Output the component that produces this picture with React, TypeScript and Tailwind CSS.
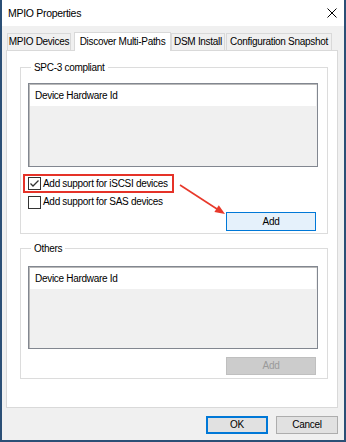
import React from "react";

const tabs = [
  { label: "MPIO Devices", w: "w-[64px]", ml: "ml-[1px]" },
  { label: "Discover Multi-Paths", w: "w-[97px]", ml: "ml-[3px]", active: true },
  { label: "DSM Install", w: "w-[54px]", ml: "ml-0" },
  { label: "Configuration Snapshot", w: "w-[106px]", ml: "ml-[1px]" },
];

const CheckBox = ({ checked }: { checked?: boolean }) => (
  <span className="w-[13px] h-[13px] border border-[#333333] bg-white flex items-center justify-center shrink-0">
    {checked && (
      <svg width="11" height="11" viewBox="0 0 11 11">
        <path d="M1.5 5.5 L4 8 L9.5 2.5" fill="none" stroke="#333333" strokeWidth="1.3" />
      </svg>
    )}
  </span>
);

const ListBox = ({ h }: { h: string }) => (
  <div className={`${h} border border-[#828790] shadow-[inset_1px_1px_0_#b9b9b9] bg-[#f0f0f0] flex flex-col p-px`}>
    <div className="h-[21px] bg-white flex items-center pl-[5px]">Device Hardware Id</div>
  </div>
);

export default function App() {
  return (
    <div className="w-[346px] h-[442px] bg-[#f0f0f0] border-x-2 border-b-2 border-[#2b4f76] flex flex-col text-[10px] tracking-[-0.3px] text-black font-['Liberation_Sans',Arial,sans-serif] leading-none whitespace-nowrap">
      {/* title bar */}
      <div className="h-[26px] bg-white flex items-center justify-between pl-[6px] pr-[7px] shrink-0">
        <span className="text-[10.5px] tracking-[-0.3px]">MPIO Properties</span>
        <svg width="10" height="10" viewBox="0 0 10 10">
          <path d="M0.5 0.5 L9.5 9.5 M9.5 0.5 L0.5 9.5" stroke="#000" strokeWidth="1" />
        </svg>
      </div>

      <div className="flex-1 flex flex-col pl-[4px] pr-[6px] pt-[6px]">
        {/* tabs */}
        <div className="h-[18px] flex items-end">
          {tabs.map((t) =>
            t.active ? (
              <div
                key={t.label}
                className={`${t.w} ${t.ml} h-[19px] -mb-px pb-px relative z-10 bg-white border-t border-x border-[#d9d9d9] flex items-center justify-center`}
              >
                {t.label}
              </div>
            ) : (
              <div
                key={t.label}
                className={`${t.w} ${t.ml} h-[17px] bg-[#f0f0f0] border-t border-x border-[#d9d9d9] flex items-center justify-center`}
              >
                {t.label}
              </div>
            )
          )}
        </div>

        {/* panel */}
        <div className="h-[358px] bg-white border border-[#d9d9d9] relative flex flex-col pl-[13px] pr-[9px]">
          <fieldset className="mt-[9px] border border-[#dcdcdc] pl-[7px] pr-[9px] pb-[2px] flex flex-col">
            <legend className="ml-[3px] px-[3px] leading-[15px]">SPC-3 compliant</legend>
            <div className="mt-[8px]">
              <ListBox h="h-[84px]" />
            </div>
            <div className="mt-[7px] -ml-[5px] w-[151px] h-[19px] border-2 border-[#e53228] flex items-center gap-[2px] pl-[3px]">
              <CheckBox checked />
              <span>Add support for iSCSI devices</span>
            </div>
            <div className="mt-[2px] h-[14px] flex items-center gap-[2px]">
              <CheckBox />
              <span>Add support for SAS devices</span>
            </div>
            <div className="mt-[3px] flex justify-end pr-[2px]">
              <button className="w-[90px] h-[19px] bg-[#e5f1fb] border border-[#0078d7] flex items-center justify-center">
                Add
              </button>
            </div>
          </fieldset>

          <fieldset className="mt-[7px] border border-[#dcdcdc] pl-[7px] pr-[9px] pb-[3px] flex flex-col">
            <legend className="ml-[3px] px-[3px] leading-[15px]">Others</legend>
            <div className="mt-[10px]">
              <ListBox h="h-[83px]" />
            </div>
            <div className="mt-[8px] flex justify-end pr-[2px]">
              <button className="w-[90px] h-[18px] bg-[#cccccc] border border-[#bfbfbf] text-[#9a9a9a] flex items-center justify-center">
                Add
              </button>
            </div>
          </fieldset>

          {/* annotation arrow */}
          <svg className="absolute left-0 top-0 pointer-events-none" width="332" height="358">
            <line x1="173" y1="134" x2="210" y2="158" stroke="#e8392b" strokeWidth="1.6" />
            <polygon points="218,163 207.4,161 211.8,154.2" fill="#e8392b" />
          </svg>
        </div>

        {/* footer buttons */}
        <div className="mt-[8px] flex justify-end gap-[8px]">
          <button className="w-[62px] h-[18px] bg-[#e1e1e1] border-2 border-[#0078d7] flex items-center justify-center">
            OK
          </button>
          <button className="w-[62px] h-[18px] bg-[#e1e1e1] border border-[#adadad] flex items-center justify-center">
            Cancel
          </button>
        </div>
      </div>
    </div>
  );
}
